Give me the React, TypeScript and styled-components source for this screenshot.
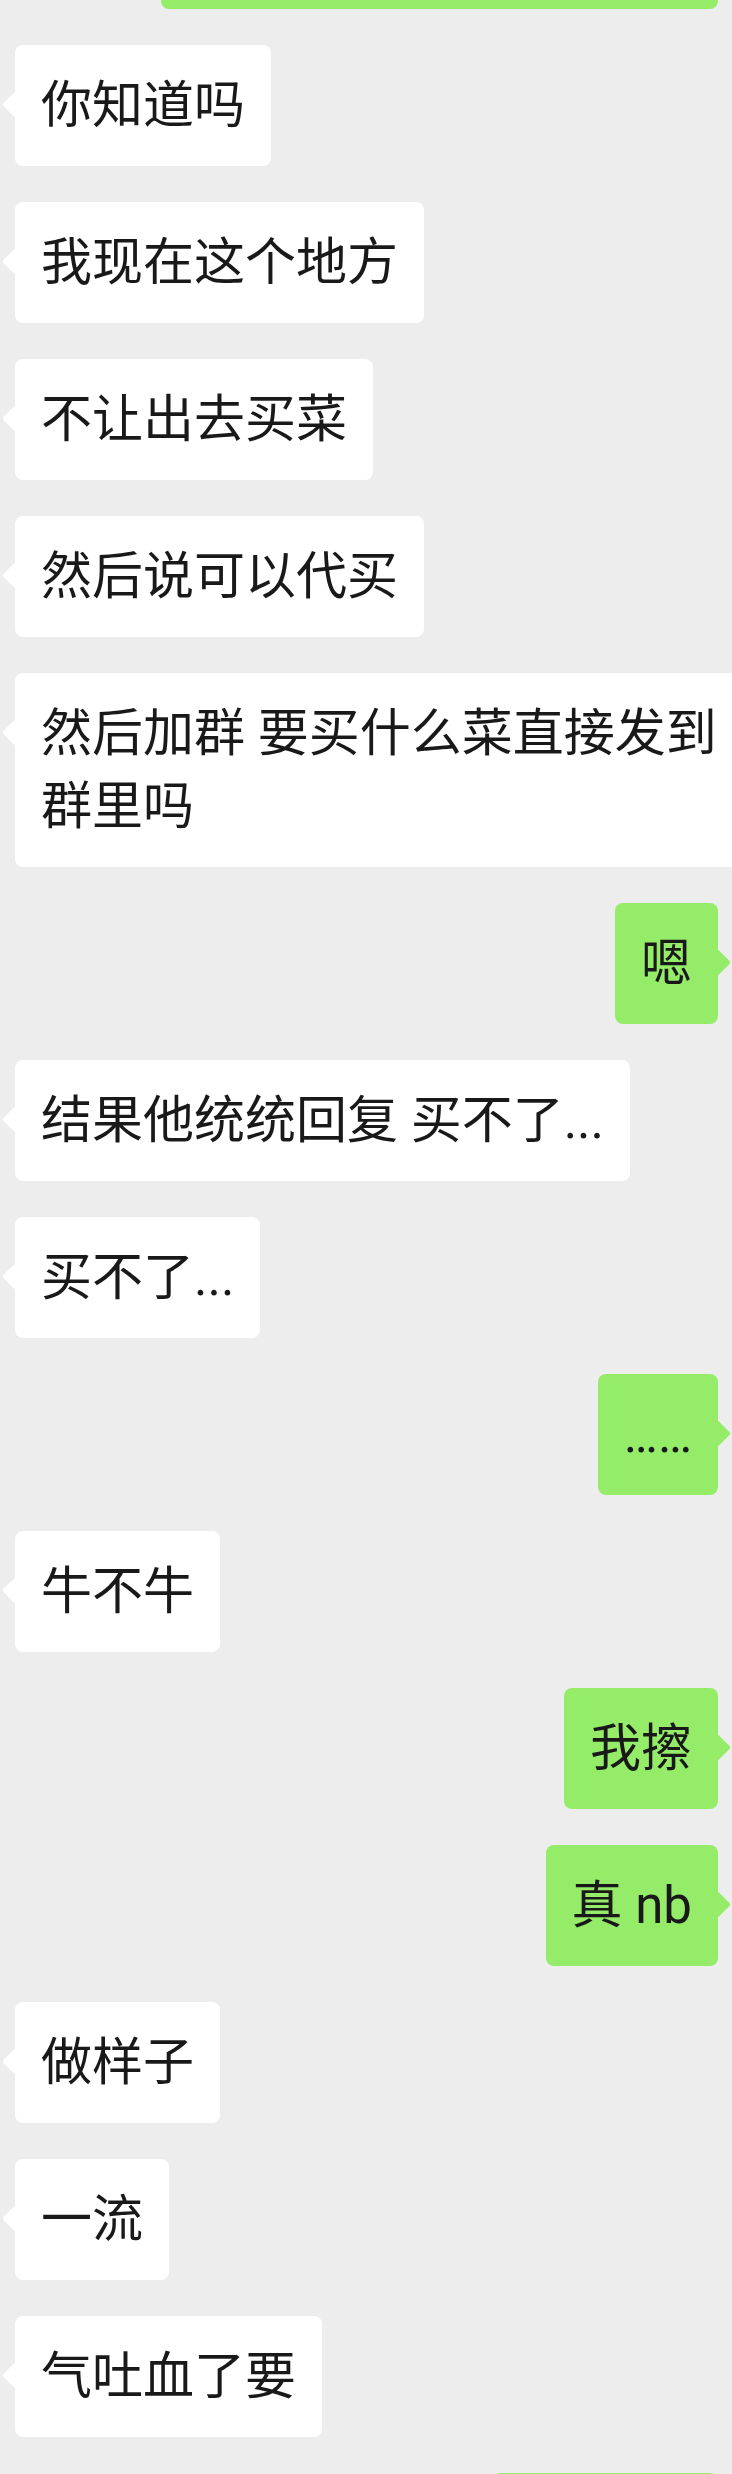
import React from "react";
import styled, { createGlobalStyle, css } from "styled-components";

const GlobalStyle = createGlobalStyle`
  html, body {
    margin: 0;
    padding: 0;
    background: #ededed;
  }
  body {
    overflow: hidden;
  }
  #root {
    width: 732px;
    height: 2474px;
    overflow: hidden;
  }
`;

const Screen = styled.main`
  width: 732px;
  height: 2474px;
  overflow: hidden;
  background: #ededed;
  font-family: Roboto, "Noto Sans CJK SC", "Noto Sans", sans-serif;
`;

const Thread = styled.div`
  display: flex;
  flex-direction: column;
  gap: 36px;
  padding: 0 14px 0 15px;
`;

const Row = styled.div<{ $mine?: boolean }>`
  display: flex;
  justify-content: ${(p) => (p.$mine ? "flex-end" : "flex-start")};
`;

const TopEdgeRow = styled(Row)`
  margin-top: -185px;
`;

const Bubble = styled.div<{ $mine?: boolean }>`
  position: relative;
  flex: 0 0 auto;
  max-width: 688px;
  padding: 24px 26px;
  border-radius: 8px;
  background: ${(p) => (p.$mine ? "#95ec69" : "#ffffff")};
  color: #191919;
  font-size: 51px;
  line-height: 73px;
  word-break: break-all;

  &::before {
    content: "";
    position: absolute;
    top: 50px;
    width: 19px;
    height: 19px;
    border-radius: 2px;
    background: inherit;
    transform: rotate(45deg);
    ${(p) =>
      p.$mine
        ? css`
            right: -9px;
          `
        : css`
            left: -9px;
          `}
  }
`;

const CutBubble = styled(Bubble)<{ $w: number }>`
  width: ${(p) => p.$w - 52}px;
  height: 146px;
`;

type Msg = { mine?: boolean; text: string };

const messages: Msg[] = [
  { text: "你知道吗" },
  { text: "我现在这个地方" },
  { text: "不让出去买菜" },
  { text: "然后说可以代买" },
  { text: "然后加群 要买什么菜直接发到群里吗" },
  { mine: true, text: "嗯" },
  { text: "结果他统统回复 买不了..." },
  { text: "买不了..." },
  { mine: true, text: "……" },
  { text: "牛不牛" },
  { mine: true, text: "我擦" },
  { mine: true, text: "真 nb" },
  { text: "做样子" },
  { text: "一流" },
  { text: "气吐血了要" },
];

export default function App() {
  return (
    <>
      <GlobalStyle />
      <Screen>
        <Thread>
          <TopEdgeRow $mine>
            <CutBubble $mine $w={557} />
          </TopEdgeRow>
          {messages.map((m, i) => (
            <Row key={i} $mine={m.mine}>
              <Bubble $mine={m.mine}>{m.text}</Bubble>
            </Row>
          ))}
          <Row $mine>
            <CutBubble $mine $w={225} />
          </Row>
        </Thread>
      </Screen>
    </>
  );
}
